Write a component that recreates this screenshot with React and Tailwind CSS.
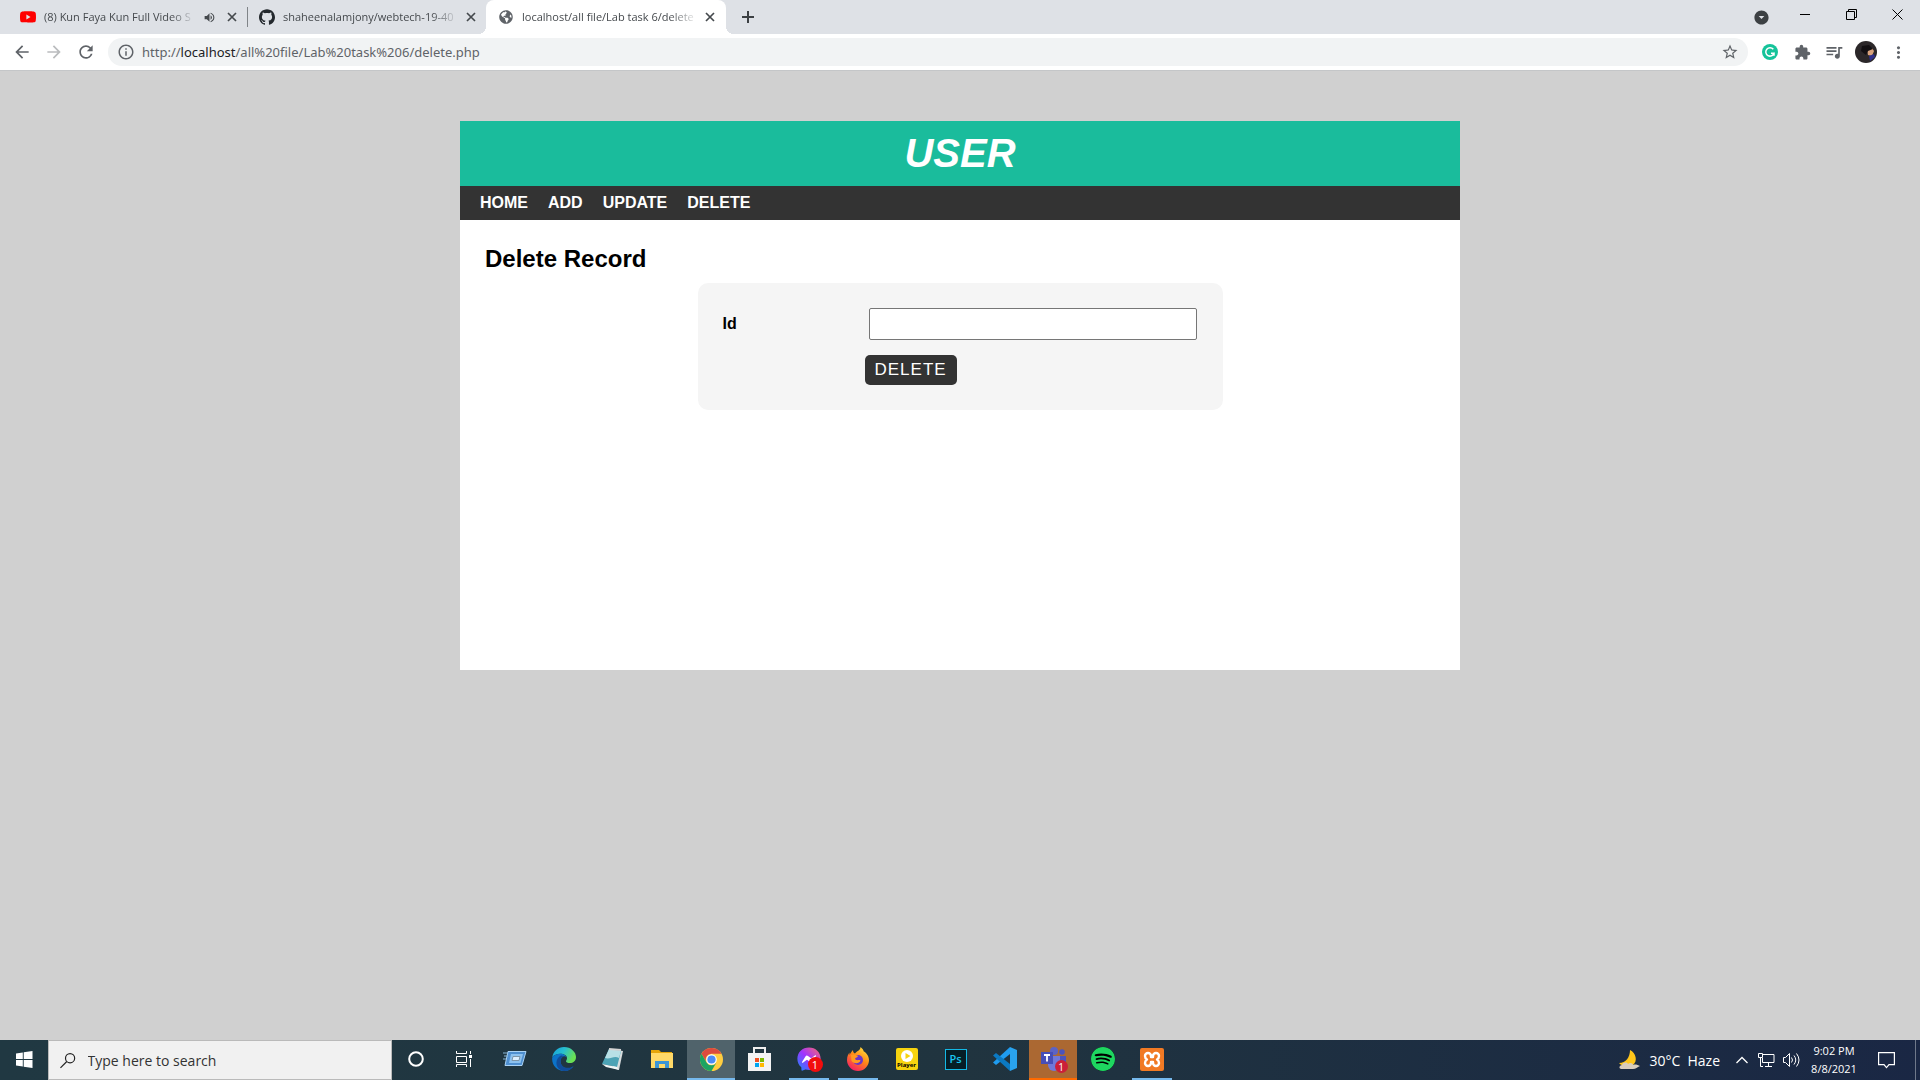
import React from "react";
import { SiYoutube, SiGithub, SiSpotify } from "react-icons/si";
import { FaFacebookMessenger, FaGlobeAmericas } from "react-icons/fa";
import { MdExtension, MdQueueMusic, MdStarBorder, MdInfoOutline, MdRefresh, MdArrowBack, MdArrowForward, MdVolumeUp, MdMoreVert, MdArrowDropDownCircle } from "react-icons/md";

function Tab({ icon, title, width, children, active }) {
  return (
    <div className={"relative flex h-full shrink-0 items-center text-[#45494d] " + width + (active ? " rounded-t-lg bg-white" : "")}>
      {active && <span className="absolute -left-2 bottom-0 size-2 bg-[radial-gradient(circle_at_top_left,transparent_8px,white_8px)]" />}
      {active && <span className="absolute -right-2 bottom-0 size-2 bg-[radial-gradient(circle_at_top_right,transparent_8px,white_8px)]" />}
      <span className="flex w-4 shrink-0 justify-center">{icon}</span>
      <span className="ml-2 min-w-0 flex-1 whitespace-nowrap [mask-image:linear-gradient(to_right,black_84%,transparent)]">{title}</span>
      {children}
      <button aria-label="Close tab" className="ml-1 flex w-4 shrink-0 justify-center"><svg width="10" height="10" stroke="currentColor" strokeWidth="1.700"><path d="M1 1l8 8M9 1l-8 8" /></svg></button>
    </div>
  );
}

function Browser() {
  const ext = "flex w-8 justify-center";
  const win = "mb-[6px] flex w-[46px] justify-center";
  return (
    <header className="shrink-0 font-['Open_Sans','Noto_Sans',sans-serif]">
      <div className="flex h-[34px] items-center bg-[#dee1e6] pl-5 text-[11px]">
        <Tab width="w-[220px]" title="(8) Kun Faya Kun Full Video S" icon={<SiYoutube size={16} className="text-[#ff0000]" />}>
          <MdVolumeUp size={13} className="ml-2 mr-1 shrink-0" />
        </Tab>
        <span className="ml-[7px] mr-[11px] h-5 w-px bg-[#808488]" />
        <Tab width="w-[220px]" title="shaheenalamjony/webtech-19-40" icon={<SiGithub size={16} className="text-[#24292e]" />} />
        <Tab active width="ml-[7px] w-[240px] pl-3 pr-2" title="localhost/all file/Lab task 6/delete" icon={<FaGlobeAmericas size={14} className="text-[#5f6368]" />} />
        <button aria-label="New tab" className="ml-3 flex size-5 items-center justify-center text-[#3c4043]"><svg width="12" height="12" stroke="currentColor" strokeWidth="2"><path d="M6 0v12M0 6h12" /></svg></button>
        <div className="flex-1" />
        <button aria-label="Search tabs" className="mr-3 text-[#3c4043]"><MdArrowDropDownCircle size={17} /></button>
        <button aria-label="Minimize" className={win}><span className="h-px w-[10px] bg-black" /></button>
        <button aria-label="Restore" className={win}><svg width="11" height="11" fill="none" stroke="#000"><path d="M2.500 2.500V.5h8v8h-2M.5 2.500h8v8h-8z" /></svg></button>
        <button aria-label="Close" className={win}><svg width="11" height="11" stroke="#000"><path d="M.5.5l10 10M10.500.5l-10 10" /></svg></button>
      </div>
      <div className="flex h-[37px] items-center border-b border-[#c4c6c8] bg-white pl-3 text-[#5f6368]">
        <button aria-label="Back" className="w-8"><MdArrowBack size={20} /></button>
        <button aria-label="Forward" className="w-8 text-[#babcbe]"><MdArrowForward size={20} /></button>
        <button aria-label="Reload" className="w-8"><MdRefresh size={20} /></button>
        <div className="flex h-7 min-w-0 flex-1 items-center rounded-full bg-[#f1f3f4] px-[9px]">
          <MdInfoOutline size={18} />
          <span className="ml-[7px] flex-1 pt-px font-['Noto_Sans',sans-serif] text-[13px]">http://<span className="text-[#202124]">localhost</span>/all%20file/Lab%20task%206/delete.php</span>
          <button aria-label="Bookmark"><MdStarBorder size={18} /></button>
        </div>
        <div className="flex items-center px-[6px]">
          <button aria-label="Grammarly" className={ext}><svg width="16" height="16" viewBox="0 0 16 16"><circle cx="8" cy="8" r="8" fill="#15c39a" /><path d="M11.300 5.300A4.200 4.200 0 1 0 12 9.200H9M12 9.200v2.600" fill="none" stroke="#fff" strokeWidth="1.500" /></svg></button>
          <button aria-label="Extensions" className={ext}><MdExtension size={17} /></button>
          <button aria-label="Media controls" className={ext}><MdQueueMusic size={20} /></button>
          <button aria-label="Profile" className={ext}><svg width="22" height="22" viewBox="0 0 22 22"><circle cx="11" cy="11" r="11" fill="#2b2729" /><path d="M12 8l5-1 2 3-2 5-4-1z" fill="#d9a27c" /><path d="M14 15l5-2 1 3-5 4z" fill="#30308c" /><path d="M7 5l7-1 4 4-5 2-2 4-5-4z" fill="#120f12" /></svg></button>
          <button aria-label="Menu" className={ext}><MdMoreVert size={19} /></button>
        </div>
      </div>
    </header>
  );
}

function Page() {
  const link = "px-[10px]";
  return (
    <main className="flex-1 bg-[#d0d0d0] pt-[50px] font-['Liberation_Sans',Arial,sans-serif] text-base text-black">
      <div className="mx-auto min-h-[549px] max-w-[1000px] bg-white">
        <h1 className="bg-[#1abc9c] py-[10px] text-center text-[40px] font-bold italic leading-[45px] text-white">USER</h1>
        <nav className="flex bg-[#333333] px-[10px] pb-2 pt-[7px] font-bold leading-[19px] text-white">
          <a className={link} href="#home">HOME</a>
          <a className={link} href="#add">ADD</a>
          <a className={link} href="#update">UPDATE</a>
          <a className={link} href="#delete">DELETE</a>
        </nav>
        <section className="p-[25px]">
          <h2 className="mb-[10px] text-2xl font-bold leading-7">Delete Record</h2>
          <form className="mx-auto w-[525px] rounded-[10px] bg-[#f5f5f5] p-[25px]" onSubmit={(e) => e.preventDefault()}>
            <div className="flex items-center">
              <label htmlFor="record-id" className="w-[146px] font-bold">Id</label>
              <input id="record-id" className="mr-px h-8 min-w-0 flex-1 rounded-xs border border-[#767676] bg-white px-2" />
            </div>
            <button className="ml-[142px] mt-[15px] block h-[30px] rounded-[5px] bg-[#333333] px-[10px] text-[17px] leading-5 tracking-[1px] text-white">DELETE</button>
          </form>
        </section>
      </div>
    </main>
  );
}

function TaskButton({ label, children, run, className = "w-[49px]" }) {
  return (
    <button aria-label={label} className={"flex h-10 shrink-0 flex-col items-center " + className}>
      <span className="flex flex-1 items-center">{children}</span>
      <span className={"h-0.5 " + (run || "w-10")} />
    </button>
  );
}

function Taskbar() {
  const blue = "w-10 bg-[#76b9ed]";
  return (
    <footer className="flex h-10 shrink-0 items-center bg-linear-to-r from-[#203842] via-[#20343f] to-[#1a2744] font-['Open_Sans','Noto_Sans',sans-serif] text-white">
      <TaskButton label="Start" className="w-12"><svg width="17" height="17" viewBox="0 0 17 17" fill="#fff"><path d="M0 2.400L6.800 1.400V8H0zM7.700 1.300L16.500 0v8H7.700zM0 8.900h6.800v6.600L0 14.600zM7.700 8.900h8.800V17l-8.800-1.300z" /></svg></TaskButton>
      <label className="flex h-10 w-[344px] items-center border border-[#bababa] bg-[#f1f1f1] pl-[11px] text-[#222]">
        <svg width="17" height="17" viewBox="0 0 17 17" fill="none" stroke="#222" strokeWidth="1.300"><circle cx="11" cy="6" r="5" /><path d="M7.400 9.600L.5 16.500" /></svg>
        <input aria-label="Search" placeholder="Type here to search" className="ml-3 w-full min-w-0 bg-transparent pt-0.5 text-sm outline-none placeholder:text-[#333]" />
      </label>
      <TaskButton label="Cortana" className="w-12"><svg width="16" height="16"><circle cx="8" cy="8" r="6.800" fill="none" stroke="#fff" strokeWidth="2" /></svg></TaskButton>
      <TaskButton label="Task view" className="w-12"><svg width="17" height="16" fill="none" stroke="#fff"><path d="M.5 0v2.500h10V0M.5 5.500h10v6H.5zM.5 16v-2.500h10V16M14.500 0v3M14.500 8v8" /><path d="M13 4h3v3h-3z" fill="#fff" stroke="none" /></svg></TaskButton>
      <TaskButton label="Run" className="ml-0.5 w-[49px]"><svg width="24" height="18" viewBox="0 0 24 18"><path d="M5 1.500h18l-4 14H2z" fill="#4e8fd0" stroke="#a9d2f5" /><path d="M8 4h12l-2.500 9H6z" fill="#8dc2ef" /><path d="M10 6.500h7l-1 4h-7z" fill="#dcefff" stroke="#7d95a8" /><path d="M0 3h5M1 6h4M0 9h3" stroke="#8ab8d8" /></svg></TaskButton>
      <TaskButton label="Edge"><svg width="24" height="24" viewBox="0 0 24 24"><defs><linearGradient id="edgeTop" x1="0" y1="0" x2="1" y2=".4"><stop offset="0" stopColor="#179fdb" /><stop offset=".5" stopColor="#27bfd0" /><stop offset="1" stopColor="#6be053" /></linearGradient></defs><path d="M.3 10.500C1 4.500 6 0 12 0c7 0 12 5 12 10 0 4-3 6-6 6-2.500 0-4-.7-4-1.800 0-.8 1-1.300 1-3C15 8.500 12 6.800 8.500 6.800 5 6.800 1.500 8 .3 10.500z" fill="url(#edgeTop)" /><path d="M.2 11C1 8.500 5 6.800 8.500 6.800c3.500 0 5.500 2 6 3.200-3-2-6 1-6 4.200 0 5 4.500 7.800 8 7.300 2-.3 4-1.300 5.500-3C20 22 16.500 24 12 24 5 24-.5 18 .2 11z" fill="#0c73c9" /><path d="M9 8.500C6 10 4 13 4.500 17c.4 3.500 3 6.200 6.500 6.900 4 .5 8-.9 10.500-5-4 3.500-13 2.200-13-4.700 0-2.500 1.500-4.200 3-5-.8-.7-1.700-.8-2.500-.7z" fill="#124c98" /></svg></TaskButton>
      <TaskButton label="Notepad"><svg width="24" height="24" viewBox="0 0 24 24"><path d="M9 2l13 2-4 19-6-2z" fill="#d7dcdd" /><path d="M8 2l12 2-4 16L1 17z" fill="#4da3b5" /><path d="M8 2l12 2-2 7C13 8 9 13 4 11z" fill="#b8e0e6" /><path d="M1 17l15 3 2 3-13-3z" fill="#f0f4f4" /><path d="M8 2l12 1" stroke="#d4d4d4" strokeWidth="2" /></svg></TaskButton>
      <TaskButton label="File Explorer"><svg width="22" height="19" viewBox="0 0 22 19"><path d="M0 0h8l2 2h11v5H0z" fill="#e5a50a" /><path d="M0 3h22v15H0z" fill="#ffd968" /><path d="M4 18v-7h14v7h-4v-4H8v4z" fill="#3c96d6" /></svg></TaskButton>
      <TaskButton label="Chrome" className="ml-px w-12 bg-[#50636b]" run="w-12 bg-[#76b9ed]"><svg width="23" height="23" viewBox="0 0 24 24"><circle cx="12" cy="12" r="12" fill="#ffcd40" /><path d="M1.600 6A12 12 0 0 1 22.400 6H12a6 6 0 0 0-5.200 9z" fill="#dd4b3e" /><path d="M1.600 6A12 12 0 0 0 12 24l5.200-9A6 6 0 0 1 6.800 15z" fill="#1da462" /><circle cx="12" cy="12" r="5.500" fill="#fff" /><circle cx="12" cy="12" r="4.300" fill="#4c8bf5" /></svg></TaskButton>
      <TaskButton label="Microsoft Store"><svg width="23" height="24" viewBox="0 0 23 24"><path d="M6 7V1h11v6" fill="none" stroke="#eee" strokeWidth="2" /><path d="M0 6h23v18H0z" fill="#f3f3f3" /><path d="M7 11h4v4H7z" fill="#f25022" /><path d="M12 11h4v4h-4z" fill="#7fba00" /><path d="M7 16h4v4H7z" fill="#00a4ef" /><path d="M12 16h4v4h-4z" fill="#ffb900" /></svg></TaskButton>
      <TaskButton label="Messenger" run={blue}><span className="relative"><svg width="0" height="0" className="absolute"><defs><linearGradient id="msgr" x1="0" y1="1" x2="1" y2="0"><stop offset="0" stopColor="#168aff" /><stop offset=".5" stopColor="#a033ff" /><stop offset="1" stopColor="#ff6b68" /></linearGradient></defs></svg><span className="flex rounded-full bg-[radial-gradient(white_8px,transparent_9px)]"><FaFacebookMessenger size={24} fill="url(#msgr)" /></span><span className="absolute -right-0.5 top-[10px] flex size-[15px] items-center justify-center rounded-full bg-[#f20d0d] text-[11px] leading-4">1</span></span></TaskButton>
      <TaskButton label="Firefox" run={blue}><svg width="24" height="24" viewBox="0 0 24 24"><defs><linearGradient id="ffx" x1=".8" y1="0" x2=".2" y2="1"><stop offset="0" stopColor="#ffe23f" /><stop offset=".45" stopColor="#ff8a16" /><stop offset="1" stopColor="#f5156c" /></linearGradient></defs><path d="M14.500 0c2 1.500 3 3 3.300 4.500 1 .2 1.700 1 2 1.500.6.300 3.200 3.500 3.200 7A11 11 0 0 1 1 13c0-4 1.500-6 2.500-7.500V8C4.500 6.500 5 5 7 3c0 2 .5 3 2 3.500C10.500 4 14.500 3.500 14.500 0z" fill="url(#ffx)" /><circle cx="12" cy="13" r="5" fill="#6a35c9" /><path d="M5 8c3-1.500 5 .2 7 .7 0 1.800-3 1.800-3 3.300 1.500 2 4 .5 5.500 1.500-1 3-6 4-9 .5z" fill="#ff9a20" /></svg></TaskButton>
      <TaskButton label="Player"><span className="flex h-[22px] w-[22px] flex-col items-center rounded-xs bg-[#f6d30f] pt-0.5"><svg width="12" height="12" className="shrink-0"><circle cx="6" cy="6" r="6" fill="#fff" /><path d="M4.500 3l5 3-5 3z" fill="#f6d30f" /></svg><span className="text-[6px] font-bold leading-[6px] text-black">Player</span></span></TaskButton>
      <TaskButton label="Photoshop"><span className="flex h-[21px] w-[22px] items-center justify-center border border-[#14b9e6] bg-[#061e26] text-[11px] font-semibold text-[#1bc5f0]">Ps</span></TaskButton>
      <TaskButton label="Visual Studio Code"><svg width="24" height="24" viewBox="0 0 24 24"><path d="M17 0v7L3 18l-3-2.500z" fill="#1f9cf0" /><path d="M0 8.500L3 6l14 11v7z" fill="#0b79c2" /><path d="M17 0l7 3v18l-7 3z" fill="#29a3ee" /></svg></TaskButton>
      <TaskButton label="Teams" className="mr-px w-12 bg-[#ab6832]" run="w-12 bg-[#ff6a00]"><span className="relative"><svg width="25" height="24" viewBox="0 0 25 24"><circle cx="13" cy="4" r="4" fill="#5b63c5" /><circle cx="21" cy="5" r="2.800" fill="#4b53bc" /><path d="M17 9h8v8a5 5 0 0 1-8 3z" fill="#4b53bc" /><path d="M7 9h12v9a6 6 0 0 1-12 0z" fill="#7078d8" /><path d="M0 5h12v12H0z" fill="#464eb8" /><path d="M3 8h6M6 8v6.500" stroke="#fff" strokeWidth="1.800" /></svg><span className="absolute -bottom-0.5 -right-0.5 flex size-[13px] items-center justify-center rounded-full bg-[#cc1f38] text-[10px] leading-3">1</span></span></TaskButton>
      <TaskButton label="Spotify"><span className="rounded-full bg-black"><SiSpotify size={24} className="text-[#1ed760]" /></span></TaskButton>
      <TaskButton label="XAMPP" run={blue}><svg width="24" height="23" viewBox="0 0 24 23"><rect width="24" height="23" rx="2" fill="#f17a24" /><path d="M8 5a3 3 0 0 0-3 3c0 1.600.8 2.800 2 3.500-1.200.7-2 1.900-2 3.500a3 3 0 0 0 6 0v-1h2v1a3 3 0 0 0 6 0c0-1.600-.8-2.800-2-3.500 1.200-.7 2-1.900 2-3.500a3 3 0 0 0-6 0v1h-2V8a3 3 0 0 0-3-3z" fill="none" stroke="#fff" strokeWidth="2.400" strokeLinejoin="round" /></svg></TaskButton>
      <div className="flex-1" />
      <button aria-label="Weather" className="flex items-center text-sm leading-5">
        <svg width="22" height="20" viewBox="0 0 22 20"><path d="M12 0c6 3 8 11 3 15C10 18 3 16 1 13c7 0 11-6 11-13z" fill="#ffc61a" /><path d="M3 19c-3-1-1-4 1-4 1-3 5-3 6-1 2-2 5-1 5 1 2-1 5 0 7 1-3 1-4 3-7 3z" fill="#d9cdbd" /></svg>
        <span className="ml-[9px] whitespace-pre pt-0.5">30°C  Haze</span>
      </button>
      <button aria-label="Show hidden icons" className="ml-4"><svg width="12" height="8" fill="none" stroke="#fff" strokeWidth="1.300"><path d="M.5 7L6 1.500 11.500 7" /></svg></button>
      <button aria-label="Network" className="ml-[10px]"><svg width="17" height="14" fill="none" stroke="#fff"><path d="M5 1.500h11v8H4.500V5M10.500 10v3M7 13.500h7M.5.5h4v4h-4zM2.500 4v9.500H5" /></svg></button>
      <button aria-label="Volume" className="ml-2"><svg width="17" height="14" fill="none" stroke="#fff"><path d="M.5 4.500h2l4-4v13l-4-4h-2zM8.500 4.500q2 2.500 0 5M11 2.500q3.500 4.500 0 9M13.500.5q5 6.500 0 13" /></svg></button>
      <div className="ml-[11px] w-[46px] whitespace-nowrap text-center text-[11px] leading-[18px]"><div>9:02 PM</div><div>8/8/2021</div></div>
      <button aria-label="Notifications" className="ml-[21px] mr-5"><svg width="17" height="17" fill="none" stroke="#fff" strokeWidth="1.200"><path d="M.6.6h15.800v12h-5.400l-2.500 3-2.500-3H.6z" /></svg></button>
      <span className="mr-1 h-full w-px bg-[#6f788a]" />
    </footer>
  );
}

export default function App() {
  return (
    <div className="flex min-h-screen flex-col">
      <Browser />
      <Page />
      <Taskbar />
    </div>
  );
}
